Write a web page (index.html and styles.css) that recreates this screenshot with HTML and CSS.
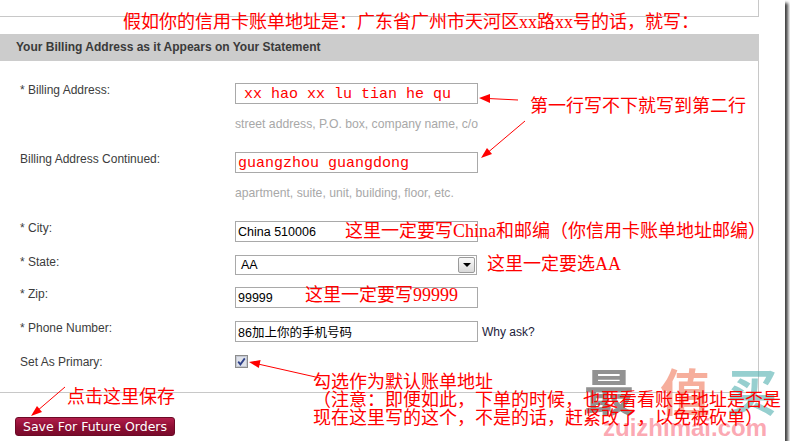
FILE: index.html
```html
<!DOCTYPE html>
<html lang="zh-CN">
<head>
    <meta charset="UTF-8">
    <meta name="viewport" content="width=device-width, initial-scale=1.0">
    <title>Billing Address</title>
    <link rel="stylesheet" href="styles.css">
</head>
<body>
    <div class="screen">
        <!-- bottom of the box above -->
        <div class="prev-box"></div>

        <!-- Billing address panel -->
        <div class="panel">
            <div class="panel-head">Your Billing Address as it Appears on Your Statement</div>
            <div class="panel-body">
                <div class="row row-hint">
                    <label class="label">* Billing Address:</label>
                    <div class="field">
                        <input type="text" class="text red-value indent" value="xx hao xx lu tian he qu">
                        <div class="hint">street address, P.O. box, company name, c/o</div>
                    </div>
                </div>
                <div class="row row-hint">
                    <label class="label">Billing Address Continued:</label>
                    <div class="field">
                        <input type="text" class="text red-value" value="guangzhou guangdong">
                        <div class="hint">apartment, suite, unit, building, floor, etc.</div>
                    </div>
                </div>
                <div class="row">
                    <label class="label">* City:</label>
                    <div class="field">
                        <input type="text" class="text" value="China 510006">
                    </div>
                </div>
                <div class="row row-select">
                    <label class="label">* State:</label>
                    <div class="field">
                        <div class="select">
                            <span class="select-value">AA</span>
                            <span class="select-btn"><span class="caret"></span></span>
                        </div>
                    </div>
                </div>
                <div class="row">
                    <label class="label">* Zip:</label>
                    <div class="field">
                        <input type="text" class="text" value="99999">
                    </div>
                </div>
                <div class="row">
                    <label class="label">* Phone Number:</label>
                    <div class="field field-inline">
                        <input type="text" class="text" value="86加上你的手机号码">
                        <span class="why">Why ask?</span>
                    </div>
                </div>
                <div class="row row-last">
                    <label class="label">Set As Primary:</label>
                    <div class="field">
                        <span class="checkbox">
                            <svg width="13" height="13" viewBox="0 0 13 13">
                                <rect x="0.5" y="0.5" width="12" height="12" fill="#dfe2ea" stroke="#8c8c8c"/>
                                <rect x="1.5" y="1.5" width="10" height="10" fill="none" stroke="#c4c8d2"/>
                                <path d="M3.2 6.6 L5.4 9.4 L9.8 3.4" fill="none" stroke="#2f428a" stroke-width="1.8"/>
                            </svg>
                        </span>
                    </div>
                </div>
            </div>
        </div>

        <div class="actions">
            <button class="save-btn">Save For Future Orders</button>
        </div>

        <!-- Red notes drawn over the screenshot -->
        <div class="notes">
            <span class="wm wm-1">最</span>
            <span class="wm wm-2">值</span>
            <span class="wm wm-3">买</span>
            <span class="wm-site">zuizhimai.com</span>

            <svg class="arrows" width="785" height="441" viewBox="0 0 785 441">
                <g stroke="#f00" stroke-width="1" fill="none">
                    <line x1="518" y1="100" x2="488" y2="98.5"/>
                    <line x1="525" y1="121" x2="486" y2="154"/>
                    <line x1="320" y1="378" x2="258" y2="364"/>
                    <line x1="65" y1="387" x2="37" y2="411"/>
                </g>
                <g fill="#f00">
                    <polygon points="479,98 490,94 490,103"/>
                    <polygon points="481,158 492,154 487,148"/>
                    <polygon points="249,362 260.6,360 258.8,368"/>
                    <polygon points="31,416 42,412 37,406"/>
                </g>
            </svg>

            <span class="note note-top">假如你的信用卡账单地址是：广东省广州市天河区xx路xx号的话，就写：</span>
            <span class="note note-line2">第一行写不下就写到第二行</span>
            <span class="note note-city">这里一定要写China和邮编（你信用卡账单地址邮编）</span>
            <span class="note note-state">这里一定要选AA</span>
            <span class="note note-zip">这里一定要写99999</span>
            <span class="note note-primary">勾选作为默认账单地址<br>（注意：即便如此，下单的时候，也要看看账单地址是否是<br>现在这里写的这个，不是的话，赶紧改了，以免被砍单）</span>
            <span class="note note-save">点击这里保存</span>
        </div>
    </div>
</body>
</html>
```

FILE: styles.css
```css
/* Basic reset */
body, div, span, label {
    margin: 0;
    padding: 0;
}

body {
    background-color: #fff;
    font-family: "Liberation Sans", Arial, "Noto Sans CJK SC", sans-serif;
    font-size: 12px;
    color: #444;
}

/* The captured window, with its drop shadow */
.screen {
    position: relative;
    width: 785px;
    height: 441px;
    overflow: hidden;
    background-color: #fff;
    box-shadow: 3px 3px 3px rgba(0, 0, 0, 0.75);
}

/* Bottom edge of the box above the panel */
.prev-box {
    box-sizing: border-box;
    width: 759px;
    height: 17px;
    border-right: 1px solid #c8c8c8;
    border-bottom: 1px solid #c8c8c8;
    margin-bottom: 17px;
}

.panel {
    width: 759px;
}

.panel-head {
    height: 27px;
    line-height: 26px;
    padding-left: 16px;
    background-color: #cccccc;
    font-weight: bold;
    color: #3a3a3a;
}

.panel-body {
    padding: 22px 0 23px 20px;
    border-right: 1px solid #c8c8c8;
    border-bottom: 1px solid #c8c8c8;
}

/* One label + field line */
.row {
    display: flex;
    align-items: flex-start;
    margin-bottom: 13px;
}

.row-hint {
    margin-bottom: 21px;
}

.row-select {
    margin-bottom: 12px;
}

.row-last {
    margin-bottom: 0;
}

.label {
    width: 215px;
    line-height: 14px;
    color: #3c3c3c;
}

.field-inline {
    display: flex;
    align-items: center;
}

/* Text boxes */
.text {
    box-sizing: border-box;
    display: block;
    width: 243px;
    height: 21px;
    margin: 0;
    padding: 0 2px;
    border: 1px solid #a9a9a9;
    font-family: "Liberation Sans", Arial, "Noto Sans CJK SC", sans-serif;
    font-size: 12.5px;
    color: #000;
    background-color: #fff;
}

.red-value {
    font-family: "Liberation Mono", "Courier New", monospace;
    font-size: 15px;
    color: #f00;
    padding-top: 2px;
}

.indent {
    padding-left: 8px;
}

.hint {
    margin-top: 13px;
    line-height: 14px;
    white-space: nowrap;
    font-size: 12.2px;
    color: #a8a8a8;
}

.why {
    margin-left: 4px;
    color: #1c1c3a;
}

/* Drop down */
.select {
    box-sizing: border-box;
    display: flex;
    align-items: center;
    width: 242px;
    height: 20px;
    border: 1px solid #a9a9a9;
    padding: 1px;
}

.select-value {
    flex: 1;
    padding-left: 4px;
    font-size: 12.5px;
    color: #000;
}

.select-btn {
    box-sizing: border-box;
    display: flex;
    align-items: center;
    justify-content: center;
    width: 17px;
    height: 16px;
    border: 1px solid #9a9a9a;
    border-radius: 2px;
    background: linear-gradient(#fafafa, #d9d9d9);
}

.caret {
    width: 0;
    height: 0;
    border-left: 4px solid transparent;
    border-right: 4px solid transparent;
    border-top: 4px solid #000;
}

.checkbox {
    display: block;
    width: 13px;
    height: 13px;
}

.checkbox svg {
    display: block;
}

/* Save button */
.actions {
    padding: 24px 0 0 15px;
}

.save-btn {
    height: 19px;
    margin: 0;
    padding: 0 7px;
    border: 1px solid #6c0a26;
    border-radius: 3px;
    background: linear-gradient(#b21d4b, #8c0e33 55%, #7a0a2b);
    color: #fff;
    font-family: "DejaVu Sans", Verdana, sans-serif;
    font-size: 12.5px;
    line-height: 16px;
    cursor: pointer;
}

/* Annotation layer */
.notes {
    position: absolute;
    left: 0;
    top: 0;
    width: 785px;
    height: 441px;
    pointer-events: none;
}

.arrows {
    position: absolute;
    left: 0;
    top: 0;
}

.note {
    position: absolute;
    font-family: "Liberation Serif", "Noto Sans CJK SC", serif;
    font-size: 18px;
    line-height: 18px;
    color: #f00;
    white-space: nowrap;
}

.note-top { left: 123px; top: 13px; }
.note-line2 { left: 530px; top: 97px; }
.note-city { left: 345px; top: 222px; }
.note-state { left: 487px; top: 255px; }
.note-zip { left: 305px; top: 286px; }
.note-primary { left: 313px; top: 373px; }
.note-save { left: 67px; top: 388px; }

/* Site watermark */
.wm {
    position: absolute;
    top: 364px;
    font-family: "Noto Sans CJK SC", sans-serif;
    font-weight: bold;
    font-size: 50px;
    line-height: 50px;
}

.wm-1 { left: 584px; color: rgba(100, 100, 100, 0.7); }
.wm-2 { left: 660px; color: rgba(240, 120, 90, 0.6); }
.wm-3 { left: 727px; color: rgba(80, 175, 175, 0.6); }

.wm-site {
    position: absolute;
    left: 603px;
    top: 416px;
    font-family: "Liberation Sans", Arial, sans-serif;
    font-weight: bold;
    font-size: 24px;
    line-height: 24px;
    color: rgba(250, 130, 145, 0.7);
}
```
